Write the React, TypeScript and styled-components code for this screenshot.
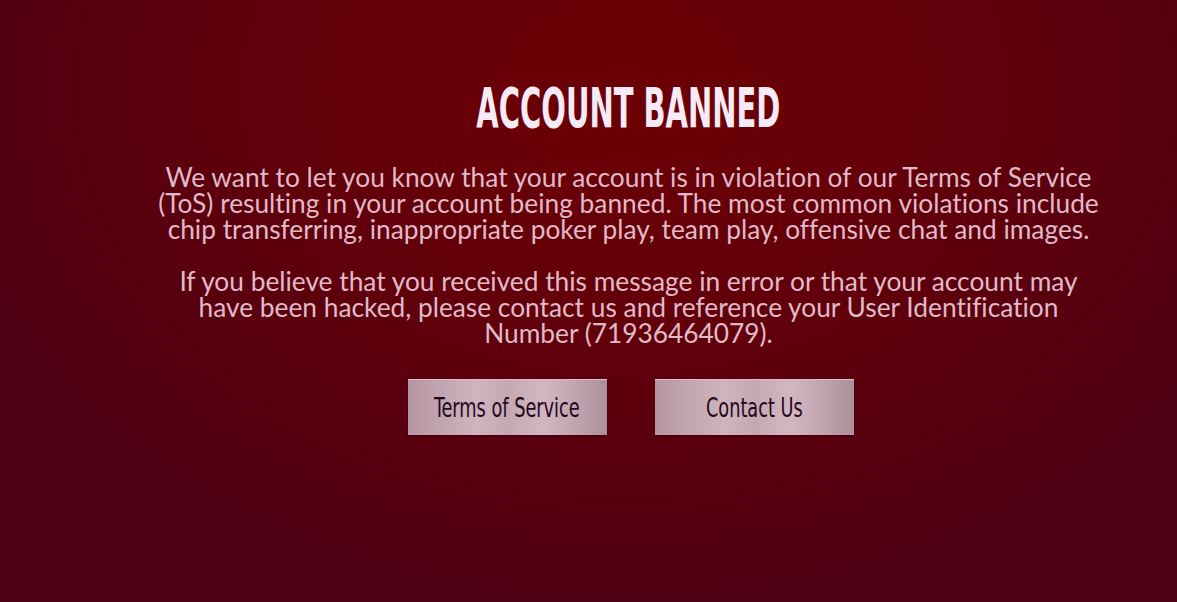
import React from "react";
import styled, { createGlobalStyle } from "styled-components";

const Global = createGlobalStyle`
  html, body { margin: 0; padding: 0; }
  body { width: 1177px; height: 602px; overflow: hidden; }
`;

const Page = styled.div`
  width: 1177px;
  height: 602px;
  box-sizing: border-box;
  background: radial-gradient(ellipse 700px 520px at 625px 90px, #6b0005 0%, #650008 35%, #58000f 75%, #4f0014 100%);
  background-color: #4f0014;
  display: flex;
  flex-direction: column;
  align-items: center;
  padding: 80px 0 0 80px;
`;

const Title = styled.h1`
  margin: 0;
  font-family: "DejaVu Sans Condensed", sans-serif;
  font-weight: 700;
  font-size: 56px;
  line-height: 56px;
  color: #f6eaf6;
  transform: scaleX(0.575);
  white-space: nowrap;
`;

const Body = styled.div`
  width: 990px;
  margin-top: 28px;
  font-family: Lato, "Open Sans", sans-serif;
  font-size: 26.3px;
  line-height: 26px;
  font-variant-ligatures: none;
  color: #e0bac9;
  text-align: center;
  white-space: nowrap;
`;

const Paragraph = styled.p`
  margin: 0 0 26px 0;
  &:last-child { margin-bottom: 0; }
`;

const ButtonRow = styled.div`
  display: flex;
  gap: 48px;
  margin: 33px 0 0 4px;
`;

const Button = styled.button`
  width: 199px;
  height: 56px;
  border: none;
  border-top: 1px solid #d9c2cb;
  box-sizing: border-box;
  padding: 0;
  display: flex;
  align-items: center;
  justify-content: center;
  background: linear-gradient(90deg, #b595a2 0%, #c4a6b2 18%, #d0b3bf 35%, #c5a8b4 50%, #d2b6c1 68%, #c4a7b2 82%, #ad8f9b 100%);
  box-shadow: 0 1px 2px rgba(0,0,0,0.35);
  cursor: pointer;
`;

const Label = styled.span`
  display: inline-block;
  font-family: "DejaVu Sans Condensed", sans-serif;
  font-size: 27px;
  color: #22091a;
  white-space: nowrap;
  transform: scaleX(0.73);
`;

export default function App() {
  return (
    <>
      <Global />
      <Page>
        <Title>ACCOUNT BANNED</Title>
        <Body>
          <Paragraph>
            We want to let you know that your account is in violation of our Terms of Service
            <br />
            (ToS) resulting in your account being banned. The most common violations include
            <br />
            chip transferring, inappropriate poker play, team play, offensive chat and images.
          </Paragraph>
          <Paragraph>
            If you believe that you received this message in error or that your account may
            <br />
            have been hacked, please contact us and reference your User Identification
            <br />
            Number (71936464079).
          </Paragraph>
        </Body>
        <ButtonRow>
          <Button><Label>Terms of Service</Label></Button>
          <Button><Label>Contact Us</Label></Button>
        </ButtonRow>
      </Page>
    </>
  );
}
